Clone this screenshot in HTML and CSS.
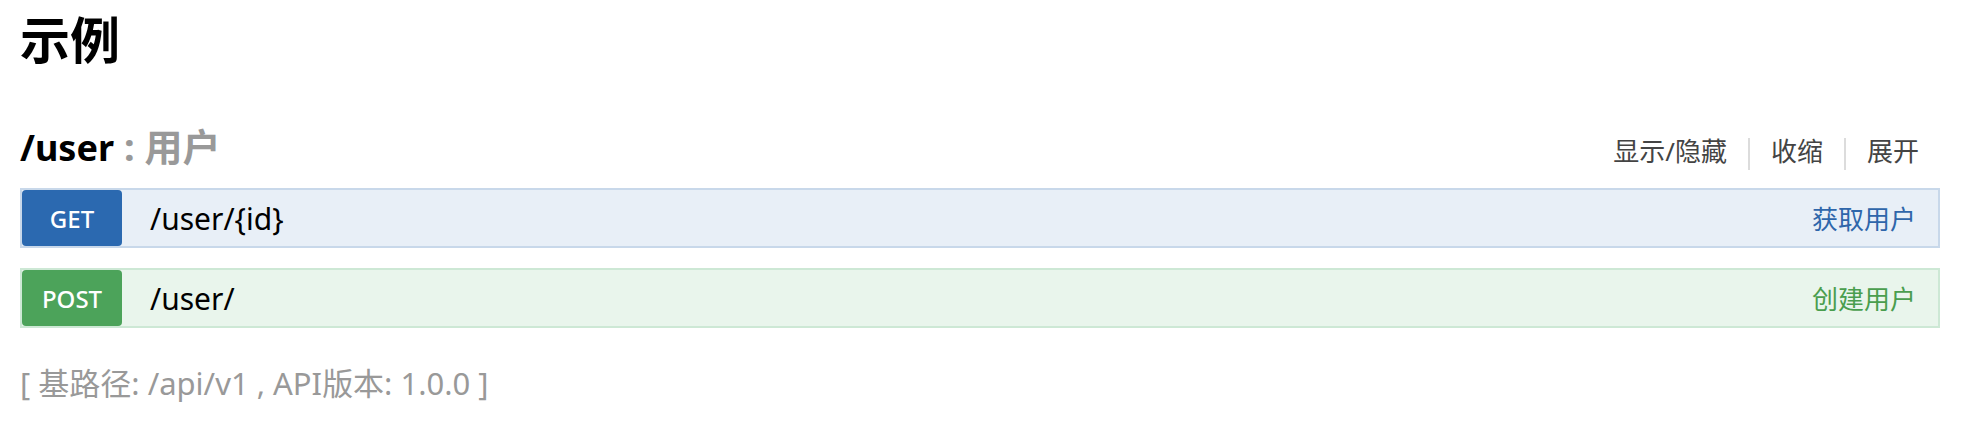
FILE: index.html
```html
<!DOCTYPE html>
<html lang="zh">
<head>
<meta charset="utf-8">
<title>示例</title>
<link rel="stylesheet" href="styles.css">
</head>
<body>
  <h1 class="title">示例</h1>
  <div class="resource">
    <div class="resource-head">
      <h2 class="resource-name"><span class="resource-path">/user</span><span class="resource-desc"> : 用户</span></h2>
      <ul class="resource-actions">
        <li class="action">显示/隐藏</li>
        <li class="action">收缩</li>
        <li class="action">展开</li>
      </ul>
    </div>
    <div class="op op-get">
      <span class="op-method">GET</span>
      <span class="op-path">/user/{id}</span>
      <span class="op-summary">获取用户</span>
    </div>
    <div class="op op-post">
      <span class="op-method">POST</span>
      <span class="op-path">/user/</span>
      <span class="op-summary">创建用户</span>
    </div>
  </div>
  <div class="footer">[ 基路径: /api/v1 , API版本: 1.0.0 ]</div>
</body>
</html>
```
FILE: styles.css
```css
* { box-sizing: border-box; }
html, body { background: #fff; }
body {
  margin: 0;
  padding: 0 24px 0 20px;
  font-family: "Noto Sans", "Noto Sans CJK SC", sans-serif;
  color: #000;
}
.title {
  margin: 15px 0 0 0;
  font-size: 50px;
  line-height: 50px;
  font-weight: bold;
}
.resource-head {
  margin-top: 61px;
  display: flex;
  justify-content: space-between;
  align-items: flex-start;
  height: 44px;
}
.resource-name {
  margin: 0;
  font-size: 36px;
  line-height: 40px;
  font-weight: bold;
}
.resource-desc { color: #999; font-size: 38px; }
.resource-actions {
  list-style: none;
  margin: 12px 0 0 0;
  padding: 0;
  display: flex;
}
.action {
  font-size: 26px;
  line-height: 26px;
  padding: 0 21px 6px 21px;
  color: #444;
  border-left: 2px solid #dcdcdc;
}
.action:first-child { border-left: none; }
.op {
  margin-top: 18px;
  height: 60px;
  border: 2px solid;
  display: flex;
  align-items: center;
}
.op + .op { margin-top: 20px; }
.op-get { background: #e8eff7; border-color: #c8d8ea; }
.op-post { background: #e9f5ec; border-color: #cde8d5; }
.op-method {
  width: 100px;
  height: 56px;
  border-radius: 4px;
  color: #fff;
  font-size: 24px;
  font-weight: 500;
  display: flex;
  align-items: center;
  justify-content: center;
}
.op-get .op-method { background: #2b69b0; }
.op-post .op-method { background: #4ca35a; }
.op-path {
  margin-left: 28px;
  font-size: 30px;
  flex: 1;
}
.op-summary {
  font-size: 26px;
  margin-right: 22px;
}
.op-get .op-summary { color: #2f66aa; }
.op-post .op-summary { color: #4a9e4e; }
.footer {
  margin-top: 35px;
  font-size: 31px;
  line-height: 40px;
  color: #999;
}
```
